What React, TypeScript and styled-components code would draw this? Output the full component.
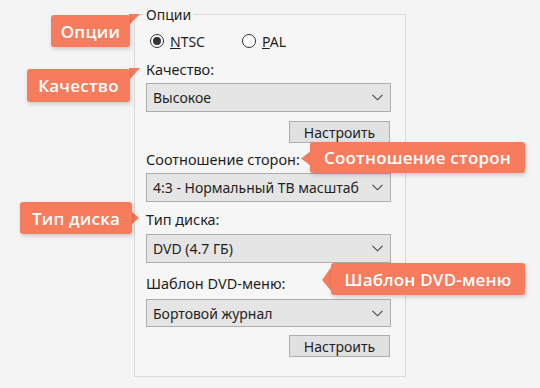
import React from "react";
import styled, { createGlobalStyle } from "styled-components";

const GlobalStyle = createGlobalStyle`
  html, body { margin: 0; padding: 0; background: #f4f4f4; }
  * { box-sizing: border-box; }
`;

const Page = styled.div`
  position: relative;
  width: 540px;
  height: 388px;
  overflow: hidden;
  background: #f4f4f4;
  padding: 6px 0 0 134px;
  font-family: "Noto Sans", "Liberation Sans", sans-serif;
  font-size: 14px;
  color: #1f1f1f;
`;

const Group = styled.fieldset`
  margin: 0;
  padding: 0;
  width: 272px;
  min-inline-size: 0;
  border: 1px solid #dadada;
  background: #f6f6f6;
`;

const Legend = styled.legend`
  margin-left: 9px;
  padding: 0 2px;
  line-height: 17px;
  font-size: 14px;
`;

const Content = styled.div`
  display: flex;
  flex-direction: column;
  padding: 0 14px 19px 11px;
`;

const RadioRow = styled.div`
  display: flex;
  align-items: center;
  height: 18px;
  margin-top: 9px;
  padding-left: 4px;
  gap: 37px;
`;

const RadioOption = styled.label`
  display: flex;
  align-items: center;
  gap: 6px;
  line-height: 17px;
`;

const RadioCircle = styled.span<{ $checked?: boolean }>`
  position: relative;
  width: 14px;
  height: 14px;
  border-radius: 50%;
  border: 1px solid #333;
  background: #fff;
  &::after {
    content: "";
    display: ${(p) => (p.$checked ? "block" : "none")};
    position: absolute;
    left: 2px;
    top: 2px;
    width: 8px;
    height: 8px;
    border-radius: 50%;
    background: #333;
  }
`;

const FieldLabel = styled.div<{ $mt: number }>`
  margin-top: ${(p) => p.$mt}px;
  line-height: 17px;
  font-size: 14.5px;
`;

const Select = styled.div<{ $mt: number; $h?: number }>`
  margin-top: ${(p) => p.$mt}px;
  height: ${(p) => p.$h ?? 29}px;
  display: flex;
  align-items: center;
  justify-content: space-between;
  padding: 0 7px 0 6px;
  background: #e5e5e5;
  border: 1px solid #adadad;
  white-space: nowrap;
`;

const Button = styled.div<{ $mt: number }>`
  margin-top: ${(p) => p.$mt}px;
  align-self: flex-end;
  margin-right: 1px;
  width: 101px;
  height: 22px;
  display: flex;
  align-items: center;
  justify-content: center;
  background: #e1e1e1;
  border: 1px solid #adadad;
`;

const Callout = styled.div<{ $x: number; $y: number; $w: number; $h: number }>`
  position: absolute;
  left: ${(p) => p.$x}px;
  top: ${(p) => p.$y}px;
  width: ${(p) => p.$w}px;
  height: ${(p) => p.$h}px;
  display: flex;
  align-items: center;
  justify-content: center;
  background: #f67c5d;
  color: #fff;
  border-radius: 3px;
  box-shadow: 1px 2px 4px rgba(0, 0, 0, 0.18);
  font-family: "Open Sans", "Noto Sans", sans-serif;
  font-weight: 600;
  font-size: 17px;
  letter-spacing: 0.2px;
  white-space: nowrap;
`;

const Tail = styled.div<{ $x: number; $y: number; $w: number; $h: number; $clip: string }>`
  position: absolute;
  left: ${(p) => p.$x}px;
  top: ${(p) => p.$y}px;
  width: ${(p) => p.$w}px;
  height: ${(p) => p.$h}px;
  background: #f67c5d;
  clip-path: ${(p) => p.$clip};
`;

const Chevron = () => (
  <svg width="11" height="7" viewBox="0 0 11 7">
    <path d="M0.5 0.8 L5.5 5.8 L10.5 0.8" fill="none" stroke="#444" strokeWidth="1.1" />
  </svg>
);

export default function App() {
  return (
    <>
      <GlobalStyle />
      <Page>
        <Group>
          <Legend>Опции</Legend>
          <Content>
            <RadioRow>
              <RadioOption>
                <RadioCircle $checked />
                <span>
                  <u>N</u>TSC
                </span>
              </RadioOption>
              <RadioOption>
                <RadioCircle />
                <span>
                  <u>P</u>AL
                </span>
              </RadioOption>
            </RadioRow>
            <FieldLabel $mt={11}>Качество:</FieldLabel>
            <Select $mt={5}>
              <span>Высокое</span>
              <Chevron />
            </Select>
            <Button $mt={9}>Настроить</Button>
            <FieldLabel $mt={8}>Соотношение сторон:</FieldLabel>
            <Select $mt={5}>
              <span>4:3 - Нормальный ТВ масштаб</span>
              <Chevron />
            </Select>
            <FieldLabel $mt={9}>Тип диска:</FieldLabel>
            <Select $mt={6}>
              <span>DVD (4.7 ГБ)</span>
              <Chevron />
            </Select>
            <FieldLabel $mt={12}>Шаблон DVD-меню:</FieldLabel>
            <Select $mt={7} $h={28}>
              <span>Бортовой журнал</span>
              <Chevron />
            </Select>
            <Button $mt={8}>Настроить</Button>
          </Content>
        </Group>

        <Tail $x={129} $y={14} $w={11} $h={11} $clip="polygon(0 0, 100% 0, 0 100%)" />
        <Callout $x={51} $y={15} $w={79} $h={32}>Опции</Callout>

        <Tail $x={129} $y={68} $w={11} $h={12} $clip="polygon(0 0, 100% 0, 0 100%)" />
        <Callout $x={27} $y={69} $w={103} $h={33}>Качество</Callout>

        <Tail $x={301} $y={151} $w={10} $h={15} $clip="polygon(100% 0, 0 50%, 100% 100%)" />
        <Callout $x={310} $y={142} $w={215} $h={31}>Соотношение сторон</Callout>

        <Tail $x={131} $y={211} $w={8} $h={14} $clip="polygon(0 0, 100% 50%, 0 100%)" />
        <Callout $x={20} $y={202} $w={112} $h={32}>Тип диска</Callout>

        <Tail $x={322} $y={266} $w={10} $h={26} $clip="polygon(100% 0, 0 54%, 100% 100%)" />
        <Callout $x={331} $y={263} $w={194} $h={32}>Шаблон DVD-меню</Callout>
      </Page>
    </>
  );
}
